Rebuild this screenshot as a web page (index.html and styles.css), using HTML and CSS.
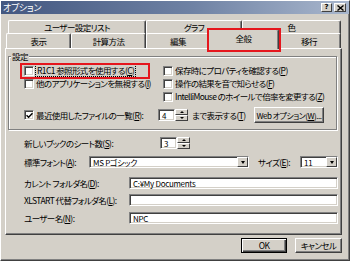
FILE: index.html
```html
<!DOCTYPE html>
<html lang="ja">
<head>
    <meta charset="UTF-8">
    <meta name="viewport" content="width=device-width, initial-scale=1.0">
    <title>オプション</title>
    <link rel="stylesheet" href="styles.css">
</head>
<body>
    <div class="window">
        <div class="titlebar">
            <span class="title">オプション</span>
            <div class="title-btns">
                <span class="tbtn help">?</span>
                <span class="tbtn close">
                    <svg width="7" height="6" viewBox="0 0 7 6"><path d="M0.5 0.5L6.5 5.5M6.5 0.5L0.5 5.5" stroke="#000" stroke-width="1.4"/></svg>
                </span>
            </div>
        </div>

        <div class="dialog">
            <div class="tab-row back">
                <div class="tab w138">ユーザー設定リスト</div>
                <div class="tab w96">グラフ</div>
                <div class="tab w99">色</div>
            </div>
            <div class="tab-row front">
                <div class="tab w65">表示</div>
                <div class="tab w75">計算方法</div>
                <div class="tab w64">編集</div>
                <div class="tab w67 active">全般</div>
                <div class="tab w64">移行</div>
            </div>

            <div class="panel">
                <fieldset class="group">
                    <legend>設定</legend>
                    <div class="group-body">
                        <div class="checks">
                            <div class="check marked"><span class="box"></span><span class="focus">R1C1 参照形式を使用する(<u>C</u>)</span></div>
                            <div class="check"><span class="box"></span><span>保存時にプロパティを確認する(<u>P</u>)</span></div>
                            <div class="check"><span class="box"></span><span>他のアプリケーションを無視する(<u>I</u>)</span></div>
                            <div class="check"><span class="box"></span><span>操作の結果を音で知らせる(<u>F</u>)</span></div>
                            <div class="check"></div>
                            <div class="check"><span class="box"></span><span>IntelliMouse のホイールで倍率を変更する(<u>Z</u>)</span></div>
                        </div>
                        <div class="recent">
                            <span class="box checked">
                                <svg width="7" height="7" viewBox="0 0 7 7"><path d="M0.5 3.2L2.6 5.3L6.5 1.2" fill="none" stroke="#000" stroke-width="1.5"/></svg>
                            </span>
                            <span class="recent-label">最近使用したファイルの一覧(<u>R</u>):</span>
                            <div class="spin">
                                <span class="field">4</span>
                                <span class="spin-btns"><span class="sbtn up"></span><span class="sbtn down"></span></span>
                            </div>
                            <span class="suffix">まで表示する(<u>T</u>)</span>
                            <span class="btn web">Web オプション(<u>W</u>)...</span>
                        </div>
                    </div>
                </fieldset>

                <div class="row sheets">
                    <span class="label w136">新しいブックのシート数(<u>S</u>):</span>
                    <div class="spin">
                        <span class="field">3</span>
                        <span class="spin-btns"><span class="sbtn up"></span><span class="sbtn down"></span></span>
                    </div>
                </div>
                <div class="row font">
                    <span class="label w65">標準フォント(<u>A</u>):</span>
                    <div class="select w160">
                        <span class="field">MS Pゴシック</span>
                        <span class="drop"></span>
                    </div>
                    <span class="label size">サイズ(<u>E</u>):</span>
                    <div class="select w38">
                        <span class="field">11</span>
                        <span class="drop"></span>
                    </div>
                </div>
                <div class="row folder">
                    <span class="label w105">カレント フォルダ名(<u>D</u>):</span>
                    <span class="field wide">C:¥My Documents</span>
                </div>
                <div class="row xlstart">
                    <span class="label w105">XLSTART 代替フォルダ名(<u>L</u>):</span>
                    <span class="field wide"></span>
                </div>
                <div class="row user">
                    <span class="label w105">ユーザー名(<u>N</u>):</span>
                    <span class="field wide">NPC</span>
                </div>
            </div>

            <div class="footer">
                <span class="btn default ok">OK</span>
                <span class="btn cancel">キャンセル</span>
            </div>
        </div>
    </div>
</body>
</html>
```

FILE: styles.css
```css
* {
    box-sizing: border-box;
}
body {
    margin: 0;
    background: #d4d0c8;
    font-family: "Noto Sans CJK JP", "Noto Sans", sans-serif;
    font-size: 8.5px;
    letter-spacing: -0.6px;
    line-height: 11px;
    color: #000;
    font-feature-settings: "palt";
}
u {
    text-decoration: underline;
    text-underline-offset: 1px;
}
.window {
    width: 350px;
    height: 261px;
    border: 1px solid;
    border-color: #fff #404040 #404040 #fff;
    box-shadow: inset -1px -1px 0 #808080;
    background: #d4d0c8;
    overflow: hidden;
}

/* title bar */
.titlebar {
    height: 13px;
    display: flex;
    align-items: center;
    justify-content: space-between;
    padding: 0 3px 0 2px;
    background: linear-gradient(to right, #435780, #6f82a4 55%, #a9b7cd);
}
.title {
    color: #fff;
    font-size: 9px;
    letter-spacing: -0.3px;
}
.title-btns {
    display: flex;
    gap: 2px;
}
.tbtn {
    width: 11px;
    height: 9px;
    display: flex;
    align-items: center;
    justify-content: center;
    background: #d4d0c8;
    border: 1px solid;
    border-color: #fff #404040 #404040 #fff;
    font-family: "DejaVu Sans", sans-serif;
    font-size: 7px;
    font-weight: bold;
    line-height: 7px;
    letter-spacing: 0;
}
.tbtn.close {
    width: 12px;
}

/* dialog + tabs */
.dialog {
    padding: 6px 7px 0 4px;
}
.tab-row {
    display: flex;
    align-items: flex-start;
}
.tab-row.back {
    height: 13px;
    margin-left: 3px;
}
.tab-row.front {
    height: 15px;
    margin-left: 1px;
}
.tab {
    height: 100%;
    display: flex;
    align-items: center;
    justify-content: center;
    background: #d4d0c8;
    border-top: 1px solid #fff;
    border-left: 1px solid #fff;
    border-right: 1px solid #404040;
    box-shadow: inset -1px 0 0 #808080;
    border-radius: 2px 2px 0 0;
}
.tab-row.back .tab {
    height: 15px;
    padding-bottom: 2px;
}
.tab.active {
    position: relative;
    z-index: 2;
    height: 20px;
    margin: -4px -2px 0;
    padding-bottom: 2px;
}
.tab.active::after {
    content: "";
    position: absolute;
    left: -2px;
    right: -3px;
    top: -2px;
    bottom: -3px;
    border: 2px solid #e5161d;
}
.w138 { width: 138px; }
.w96 { width: 96px; }
.w99 { width: 99px; }
.w65 { width: 65px; }
.w75 { width: 75px; }
.w64 { width: 64px; }
.w67.active { width: 71px; }

/* panel */
.panel {
    position: relative;
    z-index: 1;
    height: 187px;
    padding: 0 0 0 2px;
    border: 1px solid;
    border-color: #fff #404040 #404040 #fff;
    box-shadow: inset -1px -1px 0 #808080;
}
.group {
    width: 329px;
    margin: 2px 0 0;
    padding: 2px 0 6px 2px;
    border: 1px solid #808080;
    box-shadow: 1px 1px 0 #fff, inset 1px 1px 0 #fff;
}
.group legend {
    padding: 0 1px;
    margin: 0;
    line-height: 11px;
    background: #d4d0c8;
}
.group-body {
    padding-left: 13px;
}
.checks {
    display: grid;
    grid-template-columns: 139px 1fr;
    grid-auto-rows: 13px;
}
.check {
    display: flex;
    align-items: center;
    gap: 2px;
    white-space: nowrap;
}
.check.marked {
    position: relative;
}
.check.marked::after {
    content: "";
    position: absolute;
    left: -4px;
    width: 126px;
    top: -1px;
    bottom: -2px;
    border: 2px solid #e5161d;
}
.focus {
    outline: 1px dotted #000;
    outline-offset: 0;
    padding: 0 1px;
}
.box {
    width: 10px;
    height: 10px;
    flex: none;
    display: flex;
    align-items: center;
    justify-content: center;
    background: #fff;
    border: 1px solid;
    border-color: #808080 #fff #fff #808080;
    box-shadow: inset 1px 1px 0 #404040, inset -1px -1px 0 #d4d0c8;
}
.recent {
    display: flex;
    align-items: center;
    height: 16px;
    margin-top: 4px;
}
.recent-label {
    width: 124px;
    padding-left: 2px;
    white-space: nowrap;
}
.suffix {
    width: 66px;
    padding-left: 4px;
    white-space: nowrap;
}

/* fields */
.field {
    height: 12px;
    display: flex;
    align-items: center;
    padding: 0 3px;
    background: #fff;
    border: 1px solid;
    border-color: #808080 #fff #fff #808080;
    box-shadow: inset 1px 1px 0 #404040, inset -1px -1px 0 #d4d0c8;
    white-space: nowrap;
    font-size: 8px;
    letter-spacing: -0.3px;
}
.spin {
    display: flex;
    width: 30px;
    height: 12px;
}
.spin .field {
    flex: 1;
}
.spin-btns {
    width: 13px;
    display: flex;
    flex-direction: column;
}
.sbtn {
    flex: 1;
    display: flex;
    align-items: center;
    justify-content: center;
    border: 1px solid;
    border-color: #fff #404040 #404040 #fff;
    background: #d4d0c8;
}
.sbtn::before {
    content: "";
    border-left: 2px solid transparent;
    border-right: 2px solid transparent;
}
.sbtn.up::before {
    border-bottom: 2px solid #000;
}
.sbtn.down::before {
    border-top: 2px solid #000;
}
.select {
    position: relative;
    display: flex;
    height: 12px;
}
.select .field {
    flex: 1;
}
.select .drop {
    position: absolute;
    right: 1px;
    top: 1px;
    width: 11px;
    height: 10px;
    display: flex;
    align-items: center;
    justify-content: center;
    background: #d4d0c8;
    border: 1px solid;
    border-color: #fff #404040 #404040 #fff;
}
.select .drop::before {
    content: "";
    border-left: 2.5px solid transparent;
    border-right: 2.5px solid transparent;
    border-top: 3px solid #000;
}
.w160 { width: 160px; }
.w38 { width: 38px; }

.row {
    display: flex;
    align-items: center;
    height: 12px;
    padding-left: 16px;
}
.label {
    white-space: nowrap;
}
.label.w136 { width: 136px; }
.label.w65 { width: 65px; }
.label.w105 { width: 105px; }
.label.size {
    width: 42px;
    margin-left: 9px;
}
.field.wide {
    width: 209px;
}
.row.sheets { margin-top: 7px; }
.row.font { margin-top: 7px; }
.row.folder { margin-top: 9px; }
.row.xlstart { margin-top: 5px; }
.row.user { margin-top: 6px; }

/* buttons */
.btn {
    display: flex;
    align-items: center;
    justify-content: center;
    background: #d4d0c8;
    border: 1px solid;
    border-color: #fff #404040 #404040 #fff;
    box-shadow: inset -1px -1px 0 #808080;
    white-space: nowrap;
}
.btn.web {
    width: 70px;
    height: 16px;
    font-size: 8px;
    letter-spacing: -0.5px;
}
.btn.default {
    border-color: #000;
    box-shadow: inset 1px 1px 0 #fff, inset -1px -1px 0 #404040, inset -2px -2px 0 #808080;
}
.footer {
    display: flex;
    justify-content: flex-end;
    gap: 8px;
    margin-top: 3px;
}
.btn.ok {
    width: 46px;
    height: 15px;
}
.btn.cancel {
    width: 47px;
    height: 15px;
}
```
